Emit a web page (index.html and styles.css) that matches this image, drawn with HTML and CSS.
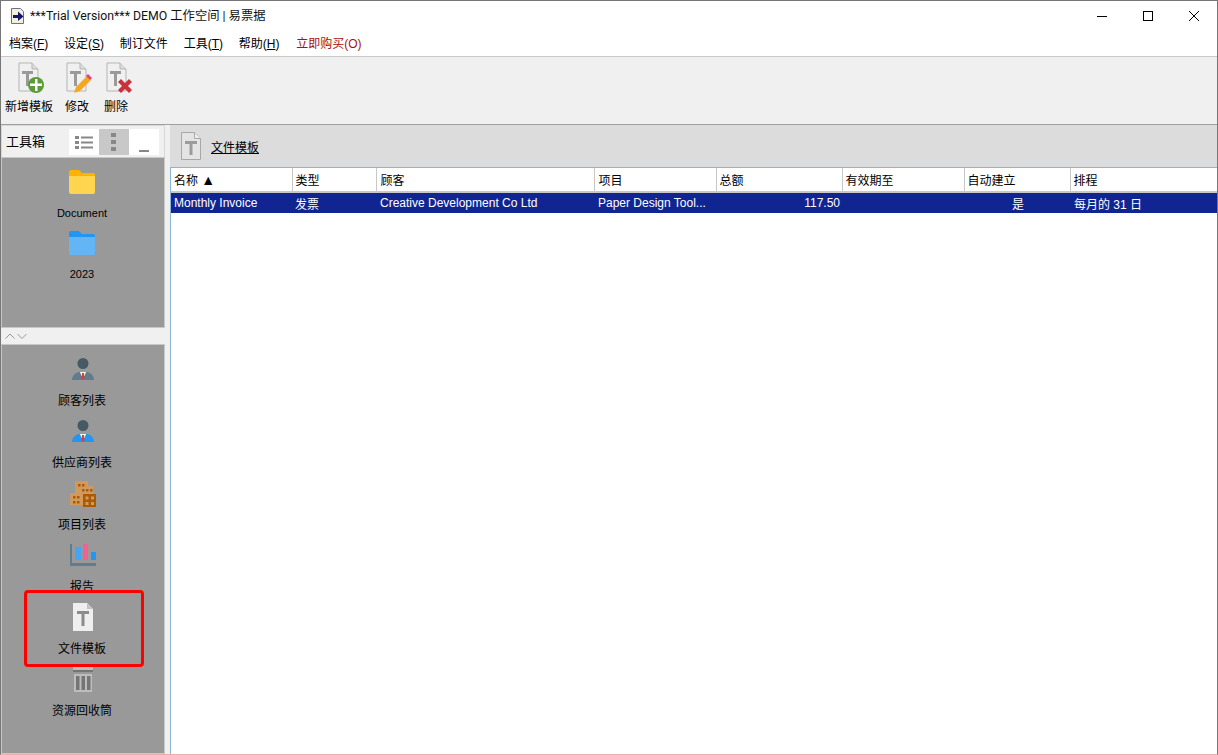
FILE: index.html
```html
<!DOCTYPE html>
<html>
<head>
    <title>***Trial Version*** DEMO 工作空间 | 易票据</title>
    <meta charset="utf-8">
    <link rel="stylesheet" href="styles.css">
</head>
<body>
    <div class="window">
        <div class="titlebar">
            <svg class="appicon" width="16" height="16" viewBox="0 0 16 16">
                <path d="M1.500 .5h9l3 3v12h-12z" fill="#f3efd8" stroke="#6d6d90"/>
                <path d="M3 7h5V3.500L13.500 8.500 8 13V10H3z" fill="#14146a"/>
            </svg>
            <span class="titletext">***Trial Version*** DEMO 工作空间 | 易票据</span>
            <div class="winbtns">
                <svg width="46" height="30" viewBox="0 0 46 30"><path d="M18 15.500h10" stroke="#000"/></svg>
                <svg width="46" height="30" viewBox="0 0 46 30"><rect x="18.500" y="10.500" width="9" height="9" fill="none" stroke="#000"/></svg>
                <svg width="46" height="30" viewBox="0 0 46 30"><path d="M18 10l10 10M28 10L18 20" stroke="#000"/></svg>
            </div>
        </div>

        <div class="menubar">
            <span>档案(<u>F</u>)</span>
            <span>设定(<u>S</u>)</span>
            <span>制订文件</span>
            <span>工具(<u>T</u>)</span>
            <span>帮助(<u>H</u>)</span>
            <span class="buy">立即购买(O)</span>
        </div>

        <div class="toolbar">
            <div class="toolbtn wide">
                <svg width="30" height="32" viewBox="0 0 30 32">
                    <path d="M4 1h13l6 6v22H4z" fill="#f0f0f0" stroke="#b5b5b5"/>
                    <path d="M17 1v6h6" fill="#ddd" stroke="#b5b5b5"/>
                    <path d="M7 9h11v3h-4v12h-3V12H7z" fill="#9a9a9a"/>
                    <circle cx="21" cy="23" r="8" fill="#5c9a3c"/>
                    <path d="M20 17h2.500v4.500H27V24h-4.500v5H20v-5h-5v-2.500h5z" fill="#fff"/>
                </svg>
                <span>新增模板</span>
            </div>
            <div class="toolbtn">
                <svg width="30" height="32" viewBox="0 0 30 32">
                    <path d="M4 1h13l6 6v22H4z" fill="#f0f0f0" stroke="#b5b5b5"/>
                    <path d="M17 1v6h6" fill="#ddd" stroke="#b5b5b5"/>
                    <path d="M7 9h11v3h-4v12h-3V12H7z" fill="#9a9a9a"/>
                    <path d="M11 31l2-6 11-11 4 4-11 11z" fill="#f5a623"/>
                    <path d="M23 14l2-2 4 4-2 2z" fill="#e0457b"/>
                </svg>
                <span>修改</span>
            </div>
            <div class="toolbtn last">
                <svg width="30" height="32" viewBox="0 0 30 32">
                    <path d="M4 1h13l6 6v22H4z" fill="#f0f0f0" stroke="#b5b5b5"/>
                    <path d="M17 1v6h6" fill="#ddd" stroke="#b5b5b5"/>
                    <path d="M7 9h11v3h-4v12h-3V12H7z" fill="#9a9a9a"/>
                    <path d="M15 20l3-3 4 4 4-4 3 3-4 4 4 4-3 3-4-4-4 4-3-3 4-4z" fill="#c8323c"/>
                </svg>
                <span>删除</span>
            </div>
        </div>

        <div class="workarea">
            <div class="sidebar">
                <div class="boxhead">
                    <span class="boxtitle">工具箱</span>
                    <div class="boxbtns">
                        <div class="boxbtn">
                            <svg width="18" height="14" viewBox="0 0 18 14"><path d="M0 1h4v3H0zM6 1.500h12v2H6zM0 6h4v3H0zM6 6.500h12v2H6zM0 11h4v3H0zM6 11.500h12v2H6z" fill="#888"/></svg>
                        </div>
                        <div class="boxbtn active">
                            <svg width="6" height="18" viewBox="0 0 6 18"><path d="M0 0h5v4H0zM0 7h5v4H0zM0 14h5v4H0z" fill="#888"/></svg>
                        </div>
                        <div class="boxbtn dash"></div>
                    </div>
                </div>
                <div class="panel toppanel">
                    <div class="navitem folderitem">
                        <svg width="28" height="24" viewBox="0 0 28 24">
                            <path d="M1 2a2 2 0 0 1 2-2h8l3 3h11a2 2 0 0 1 2 2v4H1z" fill="#ffb300"/>
                            <path d="M1 6h26v16a2 2 0 0 1-2 2H3a2 2 0 0 1-2-2z" fill="#ffd54f"/>
                        </svg>
                        <span>Document</span>
                    </div>
                    <div class="navitem folderitem">
                        <svg width="28" height="24" viewBox="0 0 28 24">
                            <path d="M1 2a2 2 0 0 1 2-2h8l3 3h11a2 2 0 0 1 2 2v4H1z" fill="#2196f3"/>
                            <path d="M1 6h26v16a2 2 0 0 1-2 2H3a2 2 0 0 1-2-2z" fill="#64b5f6"/>
                        </svg>
                        <span>2023</span>
                    </div>
                </div>
                <div class="splitter">
                    <svg width="22" height="8" viewBox="0 0 22 8"><path d="M.5 6.500l4.500-4.500 4.500 4.500M12.500 2l4.500 4.500 4.500-4.500" fill="none" stroke="#999"/></svg>
                </div>
                <div class="panel bottompanel">
                    <div class="navitem">
                        <svg width="24" height="24" viewBox="0 0 24 24">
                            <circle cx="12" cy="6.500" r="5.500" fill="#455a64"/>
                            <path d="M1 23c0-5 4-8 8-8h6c4 0 8 3 8 8z" fill="#607d8b"/>
                            <path d="M9 15h6l-1.500 4h-3z" fill="#fff"/>
                            <path d="M11 16h2l.5 5-1.500 2-1.500-2z" fill="#e53935"/>
                        </svg>
                        <span>顾客列表</span>
                    </div>
                    <div class="navitem">
                        <svg width="24" height="24" viewBox="0 0 24 24">
                            <circle cx="12" cy="6.500" r="5.500" fill="#455a64"/>
                            <path d="M1 23c0-5 4-8 8-8h6c4 0 8 3 8 8z" fill="#2196f3"/>
                            <path d="M9 15h6l-1.500 4h-3z" fill="#fff"/>
                            <path d="M11 16h2l.5 5-1.500 2-1.500-2z" fill="#e53935"/>
                        </svg>
                        <span>供应商列表</span>
                    </div>
                    <div class="navitem">
                        <svg width="28" height="28" viewBox="0 0 28 28" class="nudge">
                            <path d="M6 0h13v5h5v9H14v10H1V12h5z" fill="#d2995d"/>
                            <path d="M14 13h13v13H14z" fill="#a85a05"/>
                            <path d="M9 3h2.500v2.500H9zM13 3h2.500v2.500H13zM13 8h2.500v2.500H13zM17 8h2.500v2.500H17zM21 8h2.500v2.500H21zM4 15h2.500v2.500H4zM8 15h2.500v2.500H8zM4 20h2.500v2.500H4zM8 20h2.500v2.500H8z" fill="#a85a05"/>
                            <path d="M16.500 15.500h3v3h-3zM22 15.500h3v3h-3zM16.500 21h3v3h-3zM22 21h3v3h-3z" fill="#d2995d"/>
                        </svg>
                        <span>项目列表</span>
                    </div>
                    <div class="navitem">
                        <svg width="28" height="24" viewBox="0 0 28 24">
                            <path d="M1 1h2v19h24v3H1z" fill="#607d8b"/>
                            <path d="M6 4h6v13H6z" fill="#42a5f5"/>
                            <path d="M14 1h5v16h-5z" fill="#f06292"/>
                            <path d="M22 9h5v8h-5z" fill="#2196f3"/>
                        </svg>
                        <span>报告</span>
                    </div>
                    <div class="navitem">
                        <svg width="20" height="28" viewBox="0 0 20 28" class="nudgeup">
                            <path d="M0 0h14l6 6v22H0z" fill="#efefef"/>
                            <path d="M14 0l6 6h-6z" fill="#c4c4c4"/>
                            <path d="M4 8h12v3h-4.500v12h-3V11H4z" fill="#8c8c8c"/>
                        </svg>
                        <span>文件模板</span>
                    </div>
                    <div class="navitem">
                        <svg width="20" height="28" viewBox="0 0 20 28" class="nudgeup">
                            <path d="M6 0h8v2H6z" fill="#757575"/>
                            <path d="M0 2h20v3H0z" fill="#bdbdbd"/>
                            <path d="M0 5h20v2H0z" fill="#757575"/>
                            <path d="M1 9h18v18H1z" fill="#bdbdbd"/>
                            <path d="M3 11h3.500v14H3zM8.500 11H12v14H8.500zM14 11h3.500v14H14z" fill="#757575"/>
                        </svg>
                        <span>资源回收筒</span>
                    </div>
                    <div class="marker"></div>
                </div>
            </div>

            <div class="content">
                <div class="contenthead">
                    <svg width="22" height="30" viewBox="0 0 22 30">
                        <path d="M1.500 1.500h13l6 6v21h-19z" fill="#e4e4e4" stroke="#a8a8a8"/>
                        <path d="M14.500 1.500v6h6" fill="#eee" stroke="#a8a8a8"/>
                        <path d="M5 10h12v3h-4.500v11h-3V13H5z" fill="#9c9c9c"/>
                    </svg>
                    <u>文件模板</u>
                </div>
                <table class="grid">
                    <colgroup>
                        <col class="c1"><col class="c2"><col class="c3"><col class="c4">
                        <col class="c5"><col class="c6"><col class="c7"><col>
                    </colgroup>
                    <tr>
                        <th>名称 <span class="sort">▲</span></th>
                        <th>类型</th>
                        <th class="inset">顾客</th>
                        <th class="inset">项目</th>
                        <th>总额</th>
                        <th>有效期至</th>
                        <th>自动建立</th>
                        <th>排程</th>
                    </tr>
                    <tr class="selected">
                        <td>Monthly Invoice</td>
                        <td>发票</td>
                        <td class="inset">Creative Development Co Ltd</td>
                        <td class="inset">Paper Design Tool...</td>
                        <td class="num">117.50</td>
                        <td></td>
                        <td class="mid">是</td>
                        <td class="inset">每月的 31 日</td>
                    </tr>
                </table>
            </div>
        </div>
    </div>
</body>
</html>
```

FILE: styles.css
```css
html, body {
    margin: 0;
    height: 100%;
    overflow: hidden;
}

body {
    background-color: #fff;
    color: #000;
    font-family: "Liberation Sans", "Noto Sans CJK SC", sans-serif;
    font-size: 12px;
}

svg {
    display: block;
}

.window {
    height: 755px;
    box-sizing: border-box;
    border: 1px solid #777;
    border-bottom: 1px solid #e8b0a8;
    display: flex;
    flex-direction: column;
}

.titlebar {
    height: 29px;
    display: flex;
    align-items: center;
    padding-left: 9px;
    flex: none;
}

.titletext {
    margin-left: 4px;
    margin-bottom: 2px;
    font-family: "Roboto", "Noto Sans CJK SC", sans-serif;
    font-size: 12.300px;
    color: #111;
}

.winbtns {
    margin-left: auto;
    display: flex;
}

.menubar {
    flex: none;
    display: flex;
    align-items: center;
    gap: 15.750px;
    padding-left: 8px;
    padding-bottom: 2px;
    box-sizing: border-box;
    height: 27px;
    border-bottom: 1px solid #c8c8c8;
}

.buy {
    margin-left: 1px;
    color: #a80f0f;
}

.toolbar {
    height: 68px;
    flex: none;
    display: flex;
    gap: 12px;
    padding-left: 4px;
    background-color: #f0f0f0;
    border-bottom: 1px solid #a0a0a0;
    box-sizing: border-box;
}

.toolbtn {
    width: 24px;
    display: flex;
    flex-direction: column;
    align-items: center;
    padding-top: 5px;
}

.toolbtn.wide {
    width: 48px;
}

.toolbtn.last {
    margin-left: 3px;
}

.toolbtn svg {
    flex: none;
    margin-left: 2px;
}

.toolbtn.last svg {
    margin-left: 4px;
}

.toolbtn span {
    margin-top: 5px;
    line-height: 17px;
    white-space: nowrap;
}

.workarea {
    flex: 1;
    display: flex;
    min-height: 0;
    background-color: #f0f0f0;
}

.sidebar {
    width: 164px;
    flex: none;
    display: flex;
    flex-direction: column;
    margin-right: 5px;
}

.boxhead {
    height: 32px;
    flex: none;
    display: flex;
    align-items: center;
    padding-left: 4px;
    border: 1px solid #d8d8d8;
    border-bottom: 0;
    box-sizing: border-box;
}

.boxtitle {
    font-size: 13px;
    padding-bottom: 2px;
}

.boxbtns {
    margin-left: auto;
    margin-right: 5px;
    display: flex;
    height: 26px;
}

.boxbtn {
    width: 30px;
    background-color: #fff;
    display: flex;
    align-items: center;
    justify-content: center;
}

.boxbtn.active {
    background-color: #c8c8c8;
}

.boxbtn.dash {
    align-items: flex-end;
}

.boxbtn.dash::after {
    content: "";
    display: block;
    width: 10px;
    height: 2px;
    margin-bottom: 3px;
    background-color: #888;
}

.panel {
    background-color: #999;
    box-sizing: border-box;
    border: 1px solid #c8c8c8;
    padding-right: 2px;
    position: relative;
}

.toppanel {
    height: 171px;
    flex: none;
    padding-top: 12px;
}

.bottompanel {
    flex: 1;
    padding-top: 12px;
}

.splitter {
    height: 16px;
    flex: none;
    display: flex;
    align-items: center;
    padding-left: 4px;
}

.navitem {
    height: 62px;
    display: flex;
    flex-direction: column;
    align-items: center;
}

.navitem svg {
    margin-left: 2px;
}

.navitem span {
    margin-top: 12px;
    line-height: 17px;
}

.folderitem {
    height: 61px;
}

.folderitem svg {
    margin-left: 0;
}

.folderitem span {
    margin-top: 11px;
    font-size: 11px;
}

.navitem .nudge {
    margin-top: 0;
    margin-bottom: -4px;
}

.navitem .nudgeup {
    margin-top: -2px;
    margin-bottom: -2px;
}

.marker {
    position: absolute;
    left: 22px;
    top: 245px;
    width: 120px;
    height: 77px;
    box-sizing: border-box;
    border: 3px solid #f00;
    border-radius: 4px;
}

.content {
    flex: 1;
    min-width: 0;
    display: flex;
    flex-direction: column;
    background-color: #fff;
    border-left: 1px solid #8ab4d8;
}

.contenthead {
    height: 43px;
    flex: none;
    display: flex;
    align-items: center;
    gap: 9px;
    padding-left: 10px;
    background-color: #dcdcdc;
    border-bottom: 1px solid #8ab4d8;
    box-sizing: border-box;
    margin-left: -1px;
}

.grid {
    width: 100%;
    border-collapse: collapse;
    table-layout: fixed;
}

.c1 { width: 121px; }
.c2 { width: 84px; }
.c3 { width: 218px; }
.c4 { width: 122px; }
.c5 { width: 126px; }
.c6 { width: 122px; }
.c7 { width: 106px; }

.grid th {
    height: 24px;
    padding: 0 3px;
    font-weight: normal;
    text-align: left;
    border-right: 1px solid #c8c8c8;
    border-bottom: 2px solid #c8c8c8;
    box-sizing: border-box;
}

.grid th:last-child {
    border-right: 0;
}

.sort {
    font-size: 14px;
    line-height: 12px;
}

.grid td {
    height: 20px;
    padding: 0 3px;
    white-space: nowrap;
    overflow: hidden;
}

.grid .inset {
    padding-left: 4px;
}

.selected {
    background-color: #112592;
    color: #fff;
}

.grid .num {
    padding-right: 2px;
    text-align: right;
}

.grid .mid {
    padding-left: 5px;
    text-align: center;
}
```
